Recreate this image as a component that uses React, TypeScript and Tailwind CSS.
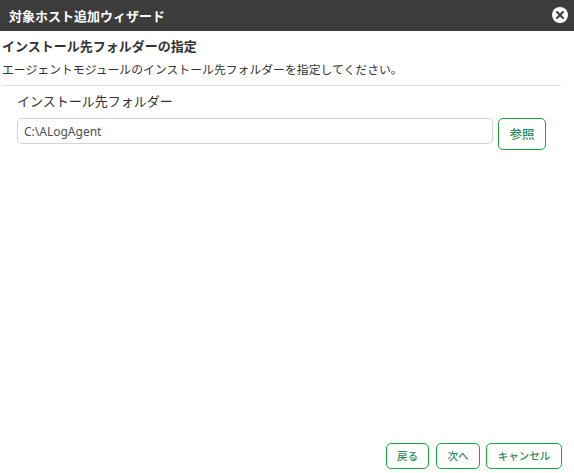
import { X } from "lucide-react";

const FONT = "font-['Noto_Sans_CJK_JP','Noto_Sans',sans-serif]";

function OutlineButton({ label, className }: { label: string; className: string }) {
  return (
    <button
      type="button"
      className={`shrink-0 rounded-[5px] border border-[#16a534] bg-white font-medium text-[#2a8a5a] ${className}`}
    >
      {label}
    </button>
  );
}

export default function App() {
  return (
    <div className={`flex h-[473px] w-[574px] flex-col overflow-hidden bg-white text-[#333333] ${FONT}`}>
      <header className="flex h-[31px] shrink-0 items-center justify-between bg-[#3c3c3c] pl-[9px] pr-[6px]">
        <h1 className="text-[13px] font-bold text-white">対象ホスト追加ウィザード</h1>
        <span className="mb-[2px] flex h-[16px] w-[16px] items-center justify-center rounded-full bg-white">
          <X size={12} strokeWidth={4} className="text-[#3c3c3c]" />
        </span>
      </header>

      <main className="flex min-h-0 flex-1 flex-col">
        <h2 className="mt-[6px] pl-[2px] text-[13px] leading-[18px] font-bold">インストール先フォルダーの指定</h2>
        <p className="mt-[6px] pl-[2px] text-[11.85px] leading-[16px]">
          エージェントモジュールのインストール先フォルダーを指定してください。
        </p>
        <hr className="mt-[8px] ml-[2px] mr-[13px] border-[#dddddd]" />

        <label className="mt-[5px] pl-[17px] text-[13px] leading-[19px]">インストール先フォルダー</label>
        <div className="mt-[8px] flex items-start gap-[5px] pl-[17px]">
          <input
            readOnly
            value="C:\ALogAgent"
            className="h-[26px] w-[476px] rounded-[5px] border border-[#ced4da] px-[6px] font-['Noto_Sans',sans-serif] text-[12px] text-[#495057] outline-none"
          />
          <OutlineButton label="参照" className="h-[32px] w-[48px] text-[12.5px]" />
        </div>
      </main>

      <footer className="flex shrink-0 justify-end gap-[6px] pb-[4px] pr-[12px]">
        <OutlineButton label="戻る" className="mr-[1px] h-[26px] w-[43px] text-[10.5px]" />
        <OutlineButton label="次へ" className="h-[26px] w-[44px] text-[10.5px]" />
        <OutlineButton label="キャンセル" className="h-[26px] w-[76px] text-[10.5px]" />
      </footer>
    </div>
  );
}
